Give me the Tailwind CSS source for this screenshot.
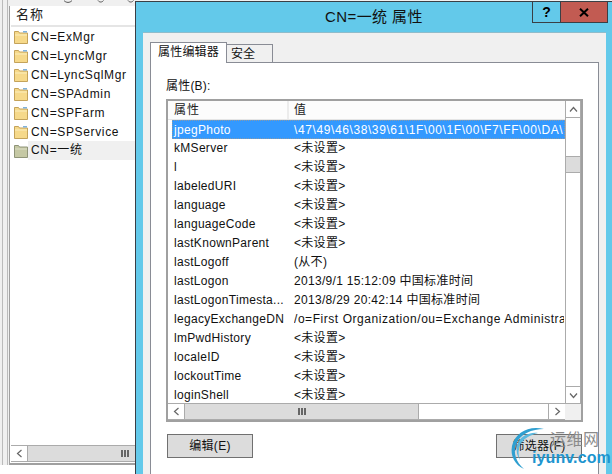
<!DOCTYPE html>
<html lang="zh">
<head>
<meta charset="UTF-8">
<script src="https://cdn.jsdelivr.net/npm/@tailwindcss/browser@4"></script>
<title>CN=一统 属性</title>
</head>
<body class="bg-white">
<div class="relative w-[612px] h-[474px] overflow-hidden bg-white text-[12px] text-[#111] font-['Liberation_Sans','Noto_Sans_CJK_SC',sans-serif]">

  <!-- left panes -->
  <div class="flex h-[465px] bg-[#f0f0f0]">
    <div class="w-[3px] border-r border-[#bbb]"></div>
    <div class="w-[5px] bg-[#f0f0f0] border-r border-[#bbb]"></div>
    <div class="w-[127px] mt-[6px] ml-[1px] bg-white border-l border-[#a0a0a0] border-b-2 border-b-[#a0a0a0] flex flex-col">
      <div class="h-[21px] mx-[1px] border-b-2 border-[#e5e5e5] pl-[5px] leading-[18px] tracking-[1px] text-[13px] text-[#222]">名称</div>
      <div class="flex-1 tracking-[0.65px]">
        <div class="flex items-center h-[19px] pl-[4px]"><svg class="w-[14px] h-[14px] mr-[3px]" viewBox="0 0 14 14"><path d="M.5 1.500h4l1 1.500h8v10.500H.5z" fill="#f6d98a" stroke="#c4a35a"/><path d="M1 5h12" stroke="#fbeebd"/><rect x="9" y="1" width="4" height="1.500" fill="#7fb2dc"/></svg>CN=ExMgr</div>
        <div class="flex items-center h-[19px] pl-[4px]"><svg class="w-[14px] h-[14px] mr-[3px]" viewBox="0 0 14 14"><path d="M.5 1.500h4l1 1.500h8v10.500H.5z" fill="#f6d98a" stroke="#c4a35a"/><path d="M1 5h12" stroke="#fbeebd"/><rect x="9" y="1" width="4" height="1.500" fill="#7fb2dc"/></svg>CN=LyncMgr</div>
        <div class="flex items-center h-[19px] pl-[4px]"><svg class="w-[14px] h-[14px] mr-[3px]" viewBox="0 0 14 14"><path d="M.5 1.500h4l1 1.500h8v10.500H.5z" fill="#f6d98a" stroke="#c4a35a"/><path d="M1 5h12" stroke="#fbeebd"/><rect x="9" y="1" width="4" height="1.500" fill="#7fb2dc"/></svg>CN=LyncSqlMgr</div>
        <div class="flex items-center h-[19px] pl-[4px]"><svg class="w-[14px] h-[14px] mr-[3px]" viewBox="0 0 14 14"><path d="M.5 1.500h4l1 1.500h8v10.500H.5z" fill="#f6d98a" stroke="#c4a35a"/><path d="M1 5h12" stroke="#fbeebd"/><rect x="9" y="1" width="4" height="1.500" fill="#7fb2dc"/></svg>CN=SPAdmin</div>
        <div class="flex items-center h-[19px] pl-[4px]"><svg class="w-[14px] h-[14px] mr-[3px]" viewBox="0 0 14 14"><path d="M.5 1.500h4l1 1.500h8v10.500H.5z" fill="#f6d98a" stroke="#c4a35a"/><path d="M1 5h12" stroke="#fbeebd"/><rect x="9" y="1" width="4" height="1.500" fill="#7fb2dc"/></svg>CN=SPFarm</div>
        <div class="flex items-center h-[19px] pl-[4px]"><svg class="w-[14px] h-[14px] mr-[3px]" viewBox="0 0 14 14"><path d="M.5 1.500h4l1 1.500h8v10.500H.5z" fill="#f6d98a" stroke="#c4a35a"/><path d="M1 5h12" stroke="#fbeebd"/><rect x="9" y="1" width="4" height="1.500" fill="#7fb2dc"/></svg>CN=SPService</div>
        <div class="flex items-center h-[19px] pl-[4px]"><svg class="w-[14px] h-[14px]" viewBox="0 0 14 14"><path d="M.5 1.500h4l1 1.500h8v10.500H.5z" fill="#c5c8a4" stroke="#8f9478"/><path d="M1 5h12" stroke="#dcdec6"/></svg><span class="flex-1 bg-[#f0f0f0] h-[19px] leading-[19px] pl-[3px]">CN=一统</span></div>
      </div>
      <div class="h-[17px] mb-[1px] ml-[1px] bg-[#dcdcdc] border-y border-[#ababab] flex items-center">
        <div class="w-[17px] h-full bg-white border-r border-[#ababab] flex items-center justify-center"><svg width="7" height="9" viewBox="0 0 7 9"><path d="M5.500 1 1.500 4.500l4 3.500" fill="none" stroke="#666" stroke-width="1.200"/></svg></div>
        <div class="ml-[93px] flex gap-[1px]"><i class="w-[2px] h-[7px] bg-[#666]"></i><i class="w-[2px] h-[7px] bg-[#666]"></i><i class="w-[2px] h-[7px] bg-[#666]"></i></div>
      </div>
    </div>
  </div>

  <!-- cut-off descenders along the top edge -->
  <svg class="absolute left-[60px] top-0" width="75" height="4" viewBox="0 0 75 4"><path d="M4 .500c2 2.500 6 2.500 8 0M38 .500c1.500 2 4 2 5.500 0M68 .500c1.500 2 4 2 5.500 0" fill="none" stroke="#555"/></svg>

  <!-- dialog -->
  <div class="absolute left-[135px] top-[1px] w-[477px] h-[473px] bg-[#63c9ea] border-l border-t border-[#3a3f45] flex flex-col">
    <div class="relative h-[30px] flex items-center justify-center text-[15px] tracking-[0.4px]">
      CN=一统 属性
      <div class="absolute right-[4px] top-[-1px] flex h-[22px] border border-[#3a3f45] tracking-normal">
        <div class="w-[28px] border-r border-[#3a3f45] flex items-center justify-center font-bold text-[14px] text-black">?</div>
        <div class="w-[46px] bg-[#c25b52] flex items-center justify-center"><svg width="10" height="9" viewBox="0 0 10 9"><path d="M1 .8 9 8.200M9 .8 1 8.200" stroke="#000" stroke-width="2"/></svg></div>
      </div>
    </div>
    <div class="ml-[7px] mr-[6px] flex-1 bg-[#f0f0f0] border-t border-[#8fbccb] pl-[7px] pr-[7px] pt-[9px]">
      <div class="flex h-[21px] items-end text-[12px] relative z-10">
        <div class="w-[77px] h-[21px] bg-white border border-[#898c95] border-b-0 pl-[7px] leading-[19px] tracking-[0.2px]">属性编辑器</div>
        <div class="w-[46px] h-[19px] border border-[#898c95] border-l-0 border-b-0 pl-[4px] leading-[18px]">安全</div>
      </div>
      <div class="h-[412px] -mt-[1px] bg-white border border-[#898c95] border-b-0 pl-[15px] pt-[15px] pr-[15px]">
        <div class="h-[21px] leading-[16px] tracking-[0.2px]">属性(B):</div>
        <div class="w-[417px] h-[323px] border-2 border-[#a0a0a0] bg-white flex">
          <div class="w-[397px] flex flex-col">
            <div class="flex h-[19px] border-b border-[#e5e5e5] bg-[#fcfcfc] text-[#222]">
              <div class="w-[121px] pl-[6px] border-r-2 border-[#ececec] leading-[18px] tracking-[1px]">属性</div>
              <div class="pl-[5px] leading-[18px]">值</div>
            </div>
            <div class="flex-1 overflow-hidden text-[12px] tracking-[0.3px]">
              <div class="flex h-[19px] leading-[18px] ml-[4px] bg-[#3399ff] text-white border border-dotted border-[#c79a6a]/60"><div class="w-[120px] pl-[1px]">jpegPhoto</div><div class="pl-[1px] whitespace-nowrap overflow-hidden flex-1 tracking-[0.6px]">\47\49\46\38\39\61\1F\00\1F\00\F7\FF\00\DA\</div></div>
              <div class="flex h-[19px] leading-[18px] ml-[4px]"><div class="w-[122px] pl-[2px]">kMServer</div><div>&lt;未设置&gt;</div></div>
              <div class="flex h-[19px] leading-[18px] ml-[4px]"><div class="w-[122px] pl-[2px]">l</div><div>&lt;未设置&gt;</div></div>
              <div class="flex h-[19px] leading-[18px] ml-[4px]"><div class="w-[122px] pl-[2px]">labeledURI</div><div>&lt;未设置&gt;</div></div>
              <div class="flex h-[19px] leading-[18px] ml-[4px]"><div class="w-[122px] pl-[2px]">language</div><div>&lt;未设置&gt;</div></div>
              <div class="flex h-[19px] leading-[18px] ml-[4px]"><div class="w-[122px] pl-[2px]">languageCode</div><div>&lt;未设置&gt;</div></div>
              <div class="flex h-[19px] leading-[18px] ml-[4px]"><div class="w-[122px] pl-[2px]">lastKnownParent</div><div>&lt;未设置&gt;</div></div>
              <div class="flex h-[19px] leading-[18px] ml-[4px]"><div class="w-[122px] pl-[2px]">lastLogoff</div><div>(从不)</div></div>
              <div class="flex h-[19px] leading-[18px] ml-[4px]"><div class="w-[122px] pl-[2px]">lastLogon</div><div>2013/9/1 15:12:09 中国标准时间</div></div>
              <div class="flex h-[19px] leading-[18px] ml-[4px]"><div class="w-[122px] pl-[2px] whitespace-nowrap">lastLogonTimesta...</div><div>2013/8/29 20:42:14 中国标准时间</div></div>
              <div class="flex h-[19px] leading-[18px] ml-[4px]"><div class="w-[122px] pl-[2px] whitespace-nowrap">legacyExchangeDN</div><div class="whitespace-nowrap overflow-hidden w-[270px] tracking-[0.55px]">/o=First Organization/ou=Exchange Administrative</div></div>
              <div class="flex h-[19px] leading-[18px] ml-[4px]"><div class="w-[122px] pl-[2px]">lmPwdHistory</div><div>&lt;未设置&gt;</div></div>
              <div class="flex h-[19px] leading-[18px] ml-[4px]"><div class="w-[122px] pl-[2px]">localeID</div><div>&lt;未设置&gt;</div></div>
              <div class="flex h-[19px] leading-[18px] ml-[4px]"><div class="w-[122px] pl-[2px]">lockoutTime</div><div>&lt;未设置&gt;</div></div>
              <div class="flex h-[19px] leading-[18px] ml-[4px]"><div class="w-[122px] pl-[2px]">loginShell</div><div>&lt;未设置&gt;</div></div>
            </div>
            <div class="h-[17px] bg-[#dcdcdc] border-y border-[#ababab] flex items-stretch">
              <div class="w-[17px] bg-white border-r border-[#ababab] flex items-center justify-center"><svg width="7" height="9" viewBox="0 0 7 9"><path d="M5.500 1 1.500 4.500l4 3.500" fill="none" stroke="#666" stroke-width="1.200"/></svg></div>
              <div class="w-[234px] flex items-center justify-center border-r border-[#ababab]"><div class="flex gap-[1px]"><i class="w-[2px] h-[7px] bg-[#666]"></i><i class="w-[2px] h-[7px] bg-[#666]"></i><i class="w-[2px] h-[7px] bg-[#666]"></i></div></div>
              <div class="flex-1 bg-white"></div>
              <div class="w-[17px] bg-white border-l border-[#ababab] flex items-center justify-center"><svg width="7" height="9" viewBox="0 0 7 9"><path d="M1.500 1 5.500 4.500l-4 3.500" fill="none" stroke="#666" stroke-width="1.200"/></svg></div>
            </div>
          </div>
          <div class="flex-1 flex flex-col bg-[#f0f0f0]">
            <div class="flex-1 bg-white border-x border-[#ababab] flex flex-col">
              <div class="h-[17px] border-b border-[#ababab] flex items-center justify-center"><svg width="9" height="7" viewBox="0 0 9 7"><path d="M1 5.500 4.500 1.500l3.500 4" fill="none" stroke="#666" stroke-width="1.200"/></svg></div>
              <div class="h-[38px]"></div>
              <div class="h-[17px] bg-[#dcdcdc] border-y border-[#ababab]"></div>
              <div class="flex-1"></div>
              <div class="h-[17px] border-t border-[#ababab] flex items-center justify-center"><svg width="9" height="7" viewBox="0 0 9 7"><path d="M1 1.500 4.500 5.500l3.500-4" fill="none" stroke="#666" stroke-width="1.200"/></svg></div>
            </div>
            <div class="h-[17px] border-t border-[#ababab]"></div>
          </div>
        </div>
        <div class="flex justify-between w-[415px] ml-[1px] mt-[12px]">
          <div class="w-[86px] h-[24px] bg-[#dcdcdc] border border-[#707070] text-center leading-[22px] tracking-[0.3px]">编辑(E)</div>
          <div class="w-[86px] h-[24px] bg-[#dcdcdc] border border-[#707070] text-center leading-[22px] tracking-[0.3px]">筛选器(F)</div>
        </div>
      </div>
    </div>
  </div>

  <!-- watermark -->
  <div class="absolute left-[508px] top-[424px] w-[104px] h-[50px]">
    <svg class="absolute left-0 top-0" width="44" height="50" viewBox="0 0 44 50"><path d="M36 5C22 1 7 8 4 22c-2 10 3 19 12 23C8 38 5 29 8 20 12 10 24 5 36 5z" fill="#2f9fd0"/><path d="M30 9C20 8 11 13 9 22c-1 5 0 10 3 14-2-5-2-10 0-15 3-6 10-10 18-12z" fill="#5bb8de"/></svg>
    <div class="absolute left-[42px] top-[6px] text-[16px] leading-[20px] text-[#8a8a8a] tracking-[0.5px] whitespace-nowrap">运维网</div>
    <div class="absolute left-[24px] top-[24px] text-[16px] leading-[20px] font-bold text-[#1d95cf] tracking-[0.1px] whitespace-nowrap font-['Liberation_Sans',sans-serif]">iyunv.com</div>
  </div>
</div>
</body>
</html>
